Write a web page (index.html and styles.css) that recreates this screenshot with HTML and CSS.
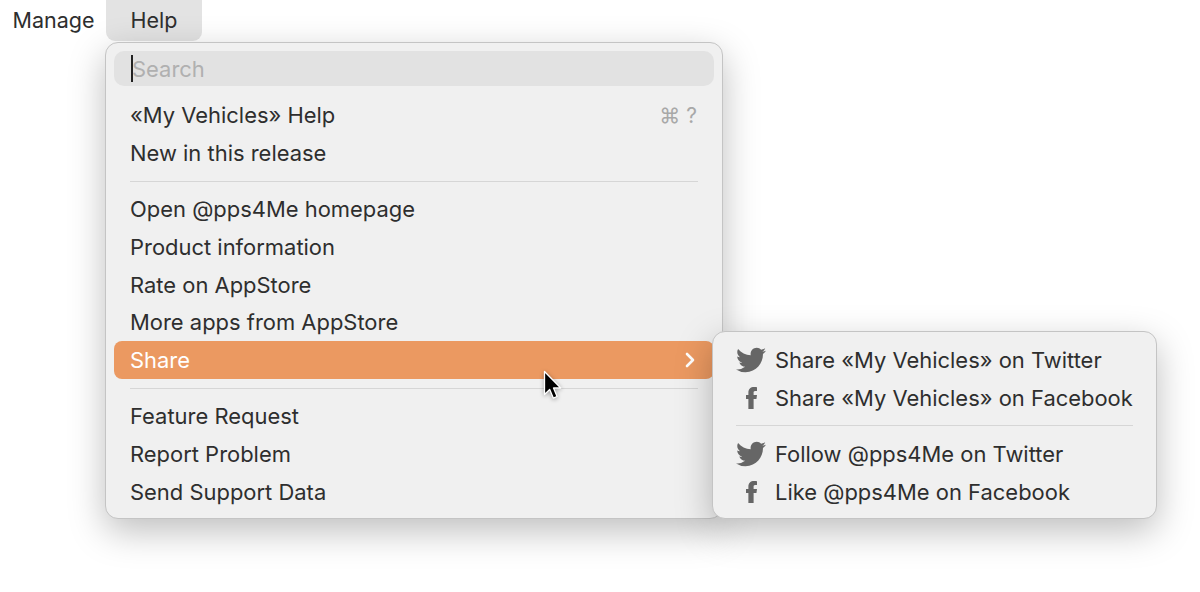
FILE: index.html
```html
<!DOCTYPE html>
<html lang="en">
<head>
<meta charset="utf-8">
<title>Help menu</title>
<link rel="stylesheet" href="styles.css">
</head>
<body>
<svg class="defs" width="0" height="0" aria-hidden="true">
  <symbol id="tw" viewBox="0 0 24 24"><path d="M24 4.56c-.88.39-1.83.65-2.83.77 1.02-.61 1.8-1.58 2.17-2.72-.95.56-2.01.97-3.13 1.19A4.92 4.92 0 0 0 16.61 2.25c-3.18 0-5.51 2.96-4.8 6.04C7.73 8.09 4.1 6.13 1.67 3.16.38 5.37 1 8.26 3.19 9.72c-.8-.03-1.56-.25-2.23-.62-.05 2.28 1.58 4.41 3.95 4.89-.69.19-1.45.23-2.22.08.63 1.95 2.44 3.37 4.6 3.41A9.9 9.9 0 0 1 0 19.54a13.94 13.94 0 0 0 7.55 2.21c9.14 0 14.31-7.72 14-14.65.96-.7 1.8-1.57 2.45-2.54z"/></symbol>
  <symbol id="fb" viewBox="0 0 12 24"><path d="M2.6 24V13H0V8.6h2.6V5.9C2.6 2.2 5 0 8.8 0c1.3 0 2.5.1 3.2.2v4.1H10c-1.5 0-1.7.8-1.7 1.9v2.4h3.7l-.6 4.4H8.3v11z"/></symbol>
</svg>
<nav class="menubar">
  <span class="bar-item">Manage</span>
  <span class="bar-item open">Help</span>
</nav>
<div class="menu main-menu">
  <div class="search"><span class="caret"></span><span class="placeholder">Search</span></div>
  <div class="row"><span>«My Vehicles» Help</span><span class="shortcut">⌘ ?</span></div>
  <div class="row">New in this release</div>
  <div class="sep"></div>
  <div class="row">Open @pps4Me homepage</div>
  <div class="row">Product information</div>
  <div class="row">Rate on AppStore</div>
  <div class="row">More apps from AppStore</div>
  <div class="row active"><span>Share</span>
    <svg class="chev" width="10" height="16" viewBox="0 0 10 16"><path d="M2 2l6 6-6 6" fill="none" stroke="#fff" stroke-width="2.6" stroke-linecap="round" stroke-linejoin="round"/></svg>
  </div>
  <div class="sep"></div>
  <div class="row">Feature Request</div>
  <div class="row">Report Problem</div>
  <div class="row">Send Support Data</div>
</div>
<div class="menu sub-menu">
  <div class="row"><span class="ic"><svg class="tw"><use href="#tw"/></svg></span>Share «My Vehicles» on Twitter</div>
  <div class="row"><span class="ic"><svg class="fb"><use href="#fb"/></svg></span>Share «My Vehicles» on Facebook</div>
  <div class="sep"></div>
  <div class="row"><span class="ic"><svg class="tw"><use href="#tw"/></svg></span>Follow @pps4Me on Twitter</div>
  <div class="row"><span class="ic"><svg class="fb"><use href="#fb"/></svg></span>Like @pps4Me on Facebook</div>
</div>
<svg class="cursor" width="20" height="32" viewBox="0 0 20 32"><path d="M1.5 1.5v23l5.2-5 3.6 8.6 3.8-1.6-3.6-8.5h7.2z" fill="#000" stroke="#fff" stroke-width="1.3" stroke-linejoin="round"/></svg>
</body>
</html>
```
FILE: styles.css
```css
* { box-sizing: border-box; }
html, body { margin: 0; height: 592px; overflow: hidden; background: #fff; }
body { font-family: Inter, "Liberation Sans", sans-serif; font-size: 21.95px; color: #2e2e2e; }
.defs { position: absolute; }
.menubar { display: flex; height: 41px; }
.bar-item { display: flex; align-items: center; justify-content: center; height: 41px; padding: 0 11.5px 2px 12.5px; font-size: 21.5px; }
.bar-item.open { width: 96px; padding-left: 0; padding-right: 0; background: #e3e3e3; border-radius: 0 0 9px 9px; }
.menu { position: absolute; background: #f0f0f0; border: 1px solid #c4c4c4; border-radius: 13px; box-shadow: 0 12px 36px rgba(0,0,0,.26); }
.main-menu { left: 105px; top: 42px; width: 618px; height: 477px; padding: 8px 8px 0; }
.sub-menu { left: 712px; top: 331px; width: 445px; height: 188px; padding: 9.4px 0 0 0; }
.search { display: flex; align-items: center; height: 35px; margin-bottom: 10.4px; padding-left: 17px; background: #e2e2e2; border-radius: 10px; }
.caret { width: 2px; height: 27px; background: #222; margin-right: -1px; }
.placeholder { color: #b0b0b0; }
.row { display: flex; align-items: center; justify-content: space-between; height: 37.6px; padding: 0 17px 0 16px; }
.sub-menu .row { justify-content: flex-start; padding: 0 0 0 23px; }
.active { background: #eb9961; color: #fff; border-radius: 8px; }
.shortcut { color: #a8a8a8; font-size: 21px; }
.chev { display: block; margin-right: 2px; }
.sep { height: 1px; margin: 9px 16px; background: #d6d6d6; }
.sub-menu .sep { margin: 8px 23px 9.7px 23px; }
.ic { display: flex; justify-content: center; align-items: center; width: 30px; margin-right: 9px; }
.ic svg { fill: #666; display: block; }
.tw { width: 30px; height: 30px; }
.fb { width: 11px; height: 22px; }
.cursor { position: absolute; left: 543px; top: 370px; filter: drop-shadow(0 1px 2px rgba(0,0,0,.35)); }
```
